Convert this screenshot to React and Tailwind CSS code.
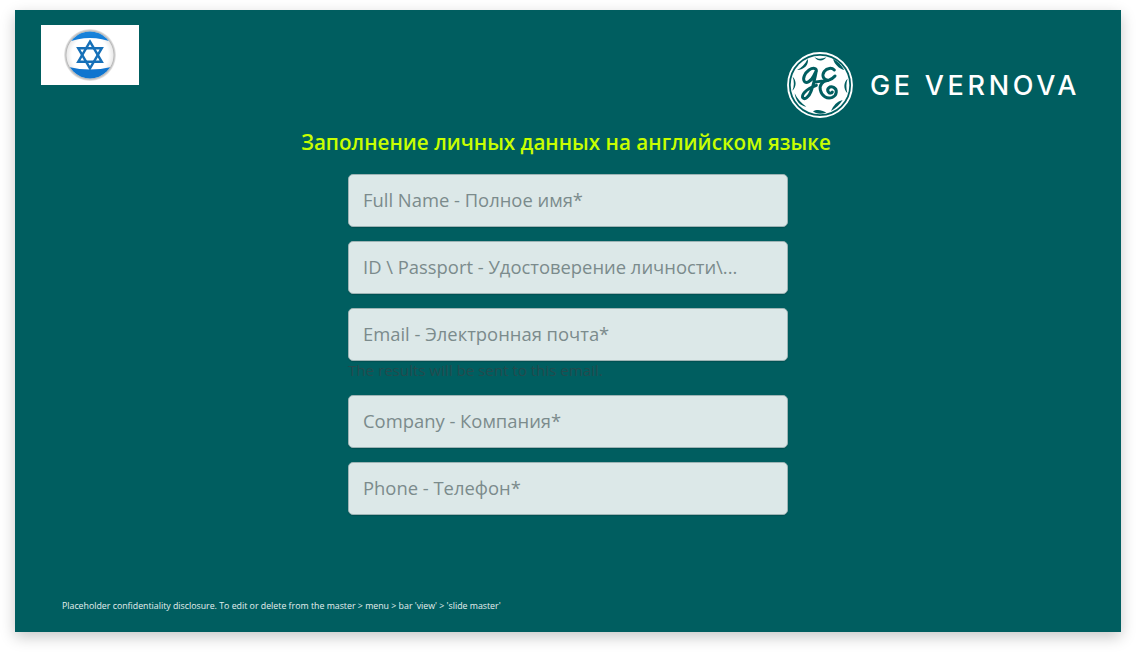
import React from "react";

function Flag() {
  return (
    <svg width="52" height="52" viewBox="0 0 52 52" className="blur-[0.35px]">
      <defs>
        <radialGradient id="rim" cx="50%" cy="50%" r="50%">
          <stop offset="82%" stopColor="#f2f2f2" />
          <stop offset="92%" stopColor="#b9b9b9" />
          <stop offset="100%" stopColor="#eeeeee" />
        </radialGradient>
        <linearGradient id="blueT" x1="0" y1="0" x2="0" y2="1">
          <stop offset="0" stopColor="#1d86dc" />
          <stop offset="1" stopColor="#0f7ad6" />
        </linearGradient>
        <radialGradient id="glass" cx="50%" cy="50%" r="50%">
          <stop offset="70%" stopColor="#ffffff" />
          <stop offset="100%" stopColor="#dfdfdf" />
        </radialGradient>
        <clipPath id="inner"><circle cx="26" cy="26" r="23.5" /></clipPath>
      </defs>
      <circle cx="26" cy="26" r="26" fill="url(#rim)" />
      <g clipPath="url(#inner)">
        <rect x="0" y="0" width="52" height="52" fill="url(#glass)" />
        <path d="M0 15 Q26 3 52 15 L52 0 L0 0 Z" fill="url(#blueT)" />
        <path d="M0 37 Q26 44 52 37 L52 52 L0 52 Z" fill="#0f75cf" />
      </g>
      <g fill="none" stroke="#1670b8" strokeWidth="2.5">
        <path d="M26 12.7 L37.7 32.7 L14.3 32.7 Z" />
        <path d="M26 39.3 L14.3 19.3 L37.7 19.3 Z" />
      </g>
    </svg>
  );
}

function GeMark() {
  return (
    <svg width="66" height="66" viewBox="12 12 198 198" className="blur-[0.3px]">
      <circle cx="111" cy="111" r="96" fill="none" stroke="#ffffff" strokeWidth="5.5" />
      <circle cx="111" cy="111" r="88" fill="#ffffff" />
      <g fill="#005e60">
        <path d="M94 26 C104 34 116 34 130 28 C122 40 104 42 94 26 Z" />
        <path d="M150 33 C165 40 176 52 184 66 C168 62 155 50 150 33 Z" />
        <path d="M194 92 C189 105 189 120 193 136 C181 122 181 104 194 92 Z" />
        <path d="M179 156 C170 170 158 181 144 189 C150 174 162 160 179 156 Z" />
        <path d="M90 190 C100 184 114 184 130 194 C114 199 98 198 90 190 Z" />
        <path d="M35 136 C42 152 54 165 70 176 C52 174 38 160 35 136 Z" />
        <path d="M28 128 C34 115 34 100 29 86 C41 98 41 116 28 128 Z" />
        <path d="M42 66 C55 60 66 49 74 33 C79 48 64 66 42 66 Z" />
      </g>
      <g fill="none" stroke="#005e60" strokeWidth="9" strokeLinecap="round" strokeLinejoin="round">
        <path d="M100 70 C102 60 90 58 78 66 C66 75 58 90 64 100 C70 108 84 100 92 84 L100 68 C96 90 92 110 84 130 C78 146 66 156 60 150 C54 142 66 124 100 112" />
        <path d="M154 66 C146 58 132 60 124 70 C116 82 120 94 134 97 C120 99 108 110 112 126 C116 144 132 154 148 148 C162 142 164 124 152 118 C140 113 130 122 136 132 C139 137 146 136 148 132" />
        <path d="M98 102 C112 100 128 99 136 97 C144 95 150 91 156 84" />
      </g>
    </svg>
  );
}

function Field({ placeholder }) {
  return (
    <input
      readOnly
      placeholder={placeholder}
      className="h-[53px] w-full rounded-[5px] border border-[#9db4b5] bg-[#dce8e8] px-[14px] pb-[2px] text-[18.4px] text-gray-700 outline-none placeholder:text-[#7b8b8c] placeholder:opacity-100 shadow-[0_1px_1px_rgba(0,0,0,0.15)]"
    />
  );
}

export default function App() {
  return (
    <div className="min-h-[653px] bg-white px-[15px] pt-[10px] font-['Open_Sans',sans-serif]">
      <div className="flex h-[622px] flex-col bg-[#005e60] shadow-[0_5px_14px_rgba(0,0,0,0.22)]">
        <div className="flex items-start justify-between pl-[26px] pr-[41px] pt-[15px]">
          <div className="flex h-[60px] w-[98px] items-center justify-center bg-white">
            <Flag />
          </div>
          <div className="mt-[27px] flex items-center gap-[17px]">
            <GeMark />
            <span className="font-['Inter',sans-serif] text-[27px] font-medium leading-none tracking-[3.7px] text-white">
              GE VERNOVA
            </span>
          </div>
        </div>

        <h1 className="mt-[9px] pr-[4px] text-center text-[20.66px] font-semibold leading-[30px] text-[#c8ff00]">
          Заполнение личных данных на английском языке
        </h1>

        <form className="mx-auto mt-[17px] flex w-[440px] flex-col">
          <Field placeholder="Full Name - Полное имя*" />
          <div className="mt-[14px]">
            <Field placeholder="ID \ Passport - Удостоверение личности\..." />
          </div>
          <div className="mt-[14px]">
            <Field placeholder="Email - Электронная почта*" />
          </div>
          <p className="h-[20px] whitespace-nowrap text-[15.1px] leading-[18px] text-[#244b4e]">
            The results will be sent to this email.
          </p>
          <div className="mt-[14px]">
            <Field placeholder="Company - Компания*" />
          </div>
          <div className="mt-[14px]">
            <Field placeholder="Phone - Телефон*" />
          </div>
        </form>

        <p className="mt-auto pb-[20px] pl-[47px] text-[8.8px] leading-[12px] text-[#e4eeee]">
          Placeholder confidentiality disclosure. To edit or delete from the master &gt; menu &gt; bar 'view' &gt; 'slide master'
        </p>
      </div>
    </div>
  );
}
